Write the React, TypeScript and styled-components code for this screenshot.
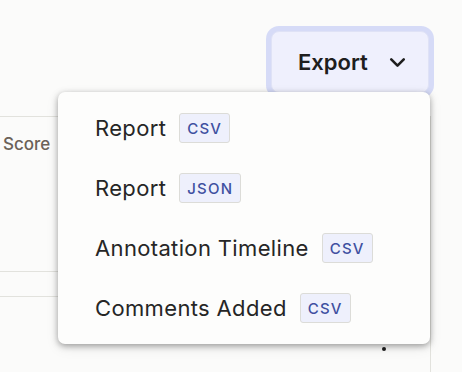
import React from "react";
import styled, { createGlobalStyle } from "styled-components";
import { ChevronDown } from "lucide-react";

const GlobalStyle = createGlobalStyle`
  html, body {
    margin: 0;
    padding: 0;
    background: #fbfbfa;
    font-family: Inter, "Noto Sans", sans-serif;
    overflow: hidden;
  }
`;

type ExportItem = { label: string; format: string };

const items: ExportItem[] = [
  { label: "Report", format: "CSV" },
  { label: "Report", format: "JSON" },
  { label: "Annotation Timeline", format: "CSV" },
  { label: "Comments Added", format: "CSV" },
];

function App() {
  return (
    <Page>
      <GlobalStyle />
      <TopBar>
        <ExportWrap>
          <ExportButton>
            Export
            <ChevronDown size={25} strokeWidth={2.5} />
          </ExportButton>
          <Menu>
            {items.map((item, i) => (
              <MenuItem key={i}>
                {item.label}
                <Badge>{item.format}</Badge>
              </MenuItem>
            ))}
          </Menu>
        </ExportWrap>
      </TopBar>
      <Card>
        <HeaderRow>
          <HeaderCell>Score</HeaderCell>
        </HeaderRow>
        <Row />
        <Row $last>
          <Kebab width="6" height="20" viewBox="0 0 6 20">
            <circle cx="3" cy="3" r="2" />
            <circle cx="3" cy="10" r="2" />
            <circle cx="3" cy="17" r="2" />
          </Kebab>
        </Row>
      </Card>
    </Page>
  );
}

const Page = styled.div`
  height: 372px;
  display: flex;
  flex-direction: column;
`;

const TopBar = styled.div`
  display: flex;
  justify-content: flex-end;
  padding: 31px 33px 0 0;
  position: relative;
  z-index: 2;
`;

const ExportWrap = styled.div`
  position: relative;
`;

const ExportButton = styled.button`
  display: flex;
  align-items: center;
  gap: 17px;
  height: 62px;
  width: 158px;
  padding: 0 18px 0 26px;
  border: 1px solid #dfe2f6;
  border-radius: 8px;
  background: #eff0fd;
  box-shadow: 0 0 0 5px #d6dbf7;
  font-family: Inter, "Noto Sans", sans-serif;
  font-size: 22px;
  font-weight: 600;
  color: #1e1e1e;
  cursor: pointer;
`;

const Menu = styled.div`
  position: absolute;
  top: calc(100% - 1px);
  right: -1px;
  width: 372px;
  box-sizing: border-box;
  padding: 6px 0;
  background: #fdfdfc;
  border-radius: 7px;
  box-shadow: 0 2px 6px rgba(0, 0, 0, 0.35), 0 4px 14px rgba(0, 0, 0, 0.08);
`;

const MenuItem = styled.div`
  display: flex;
  align-items: center;
  gap: 13px;
  height: 60px;
  padding: 0 37px;
  font-size: 22px;
  letter-spacing: 0.35px;
  color: #262626;
`;

const Badge = styled.span`
  display: inline-flex;
  align-items: center;
  height: 28px;
  padding: 0 7px;
  border: 1px solid #dcdcd8;
  border-radius: 3px;
  background: #eef0fc;
  color: #3f50a1;
  font-size: 15px;
  font-weight: 500;
  letter-spacing: 1.2px;
`;

const Card = styled.div`
  margin: 23px 31px 0 0;
  flex: 1;
  border-top: 1px solid #e2e2dd;
  border-right: 1px solid #e2e2dd;
  display: flex;
  flex-direction: column;
`;

const HeaderRow = styled.div`
  height: 154px;
  border-bottom: 1px solid #e2e2dd;
`;

const HeaderCell = styled.div`
  padding: 17px 0 0 3px;
  font-size: 17px;
  font-weight: 500;
  color: #6b6258;
`;

const Row = styled.div<{ $last?: boolean }>`
  height: ${(p) => (p.$last ? "auto" : "24px")};
  flex: ${(p) => (p.$last ? 1 : "none")};
  border-bottom: ${(p) => (p.$last ? "none" : "1px solid #e2e2dd")};
  display: flex;
  justify-content: flex-end;
  padding: ${(p) => (p.$last ? "35px 43px 0 0" : "0")};
`;

const Kebab = styled.svg`
  fill: #1e1e1e;
`;

export default App;
